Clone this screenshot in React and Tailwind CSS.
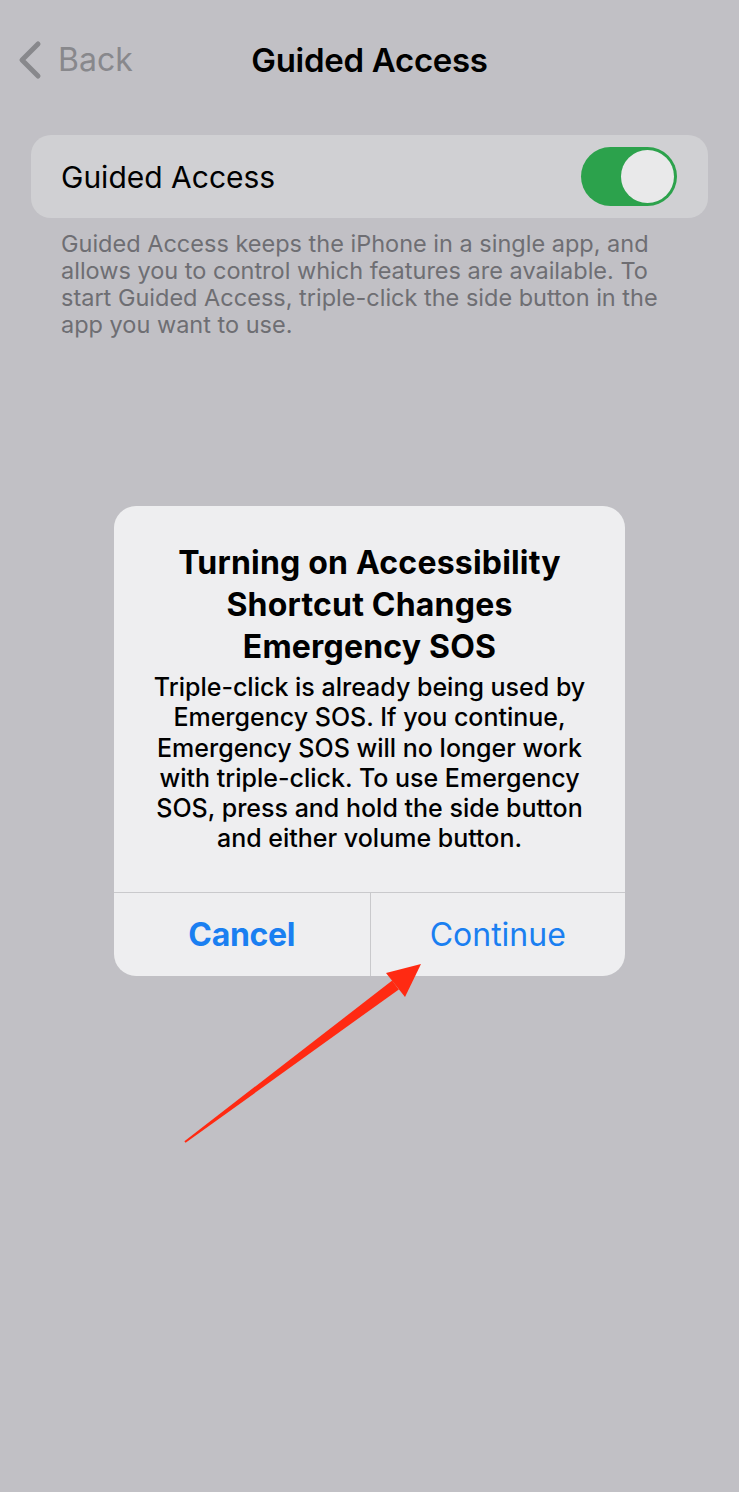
export default function App() {
  return (
    <div className="relative w-[739px] h-[1492px] overflow-hidden bg-[#c1c0c5] font-['Inter',sans-serif]">
      {/* Nav bar */}
      <div className="grid grid-cols-[1fr_auto_1fr] items-center h-[56px] mt-[32px]">
        <div className="flex items-center pl-[14px] gap-[14px] text-[#88888c]">
          <svg width="30" height="40" viewBox="0 0 30 40" fill="none">
            <path d="M24 4 L8 20 L24 36" stroke="#88888c" strokeWidth="5" strokeLinecap="round" strokeLinejoin="round" />
          </svg>
          <span className="text-[32px] leading-none">Back</span>
        </div>
        <div className="text-[33px] font-semibold leading-none text-black tracking-[-0.3px]">Guided Access</div>
        <div />
      </div>

      {/* Toggle card */}
      <div className="mx-[31px] mt-[47px] h-[83px] rounded-[20px] bg-[#d0d0d3] flex items-center justify-between pl-[30px] pr-[31px]">
        <span className="text-[30px] text-black leading-none">Guided Access</span>
        <div className="w-[96px] h-[59px] rounded-full bg-[#2ca24c] flex items-center justify-end pr-[3px]">
          <div className="w-[53px] h-[53px] rounded-full bg-[#e9e9ea]" />
        </div>
      </div>

      <p className="px-[61px] pr-[50px] mt-[12px] text-[23.5px] leading-[27px] text-[#6e6e73]">
        Guided Access keeps the iPhone in a single app, and allows you to control which features are available. To start Guided Access, triple-click the side button in the app you want to use.
      </p>

      {/* Alert */}
      <div className="absolute left-[114px] top-[506px] w-[511px] h-[470px] rounded-[22px] bg-[#eeeef0] flex flex-col overflow-hidden">
        <div className="flex-1 flex flex-col items-center pt-[36px] text-center text-black">
          <div className="text-[32px] font-bold leading-[42px] tracking-[0.2px]">
            Turning on Accessibility
            <br />
            Shortcut Changes
            <br />
            Emergency SOS
          </div>
          <div className="mt-[4px] px-[34px] text-[25px] font-medium leading-[30.3px]">
            Triple-click is already being used by Emergency SOS. If you continue, Emergency SOS will no longer work with triple-click. To use Emergency SOS, press and hold the side button and either volume button.
          </div>
        </div>
        <div className="h-[84px] border-t border-[#c9c9cc] grid grid-cols-2">
          <div className="flex items-center justify-center text-[32px] font-bold text-[#1a7ff1] tracking-[-0.3px]">Cancel</div>
          <div className="flex items-center justify-center border-l border-[#c9c9cc] text-[32px] text-[#1a7ff1]">Continue</div>
        </div>
      </div>

      {/* Red annotation arrow */}
      <svg className="absolute left-0 top-0 pointer-events-none" width="739" height="1492" viewBox="0 0 739 1492">
        <polygon points="184.4,1141.2 185.6,1142.8 398.8,989.4 392.2,980.6" fill="#ff2a12" />
        <polygon points="421,964 386,973 405,997" fill="#ff2a12" />
      </svg>
    </div>
  );
}
